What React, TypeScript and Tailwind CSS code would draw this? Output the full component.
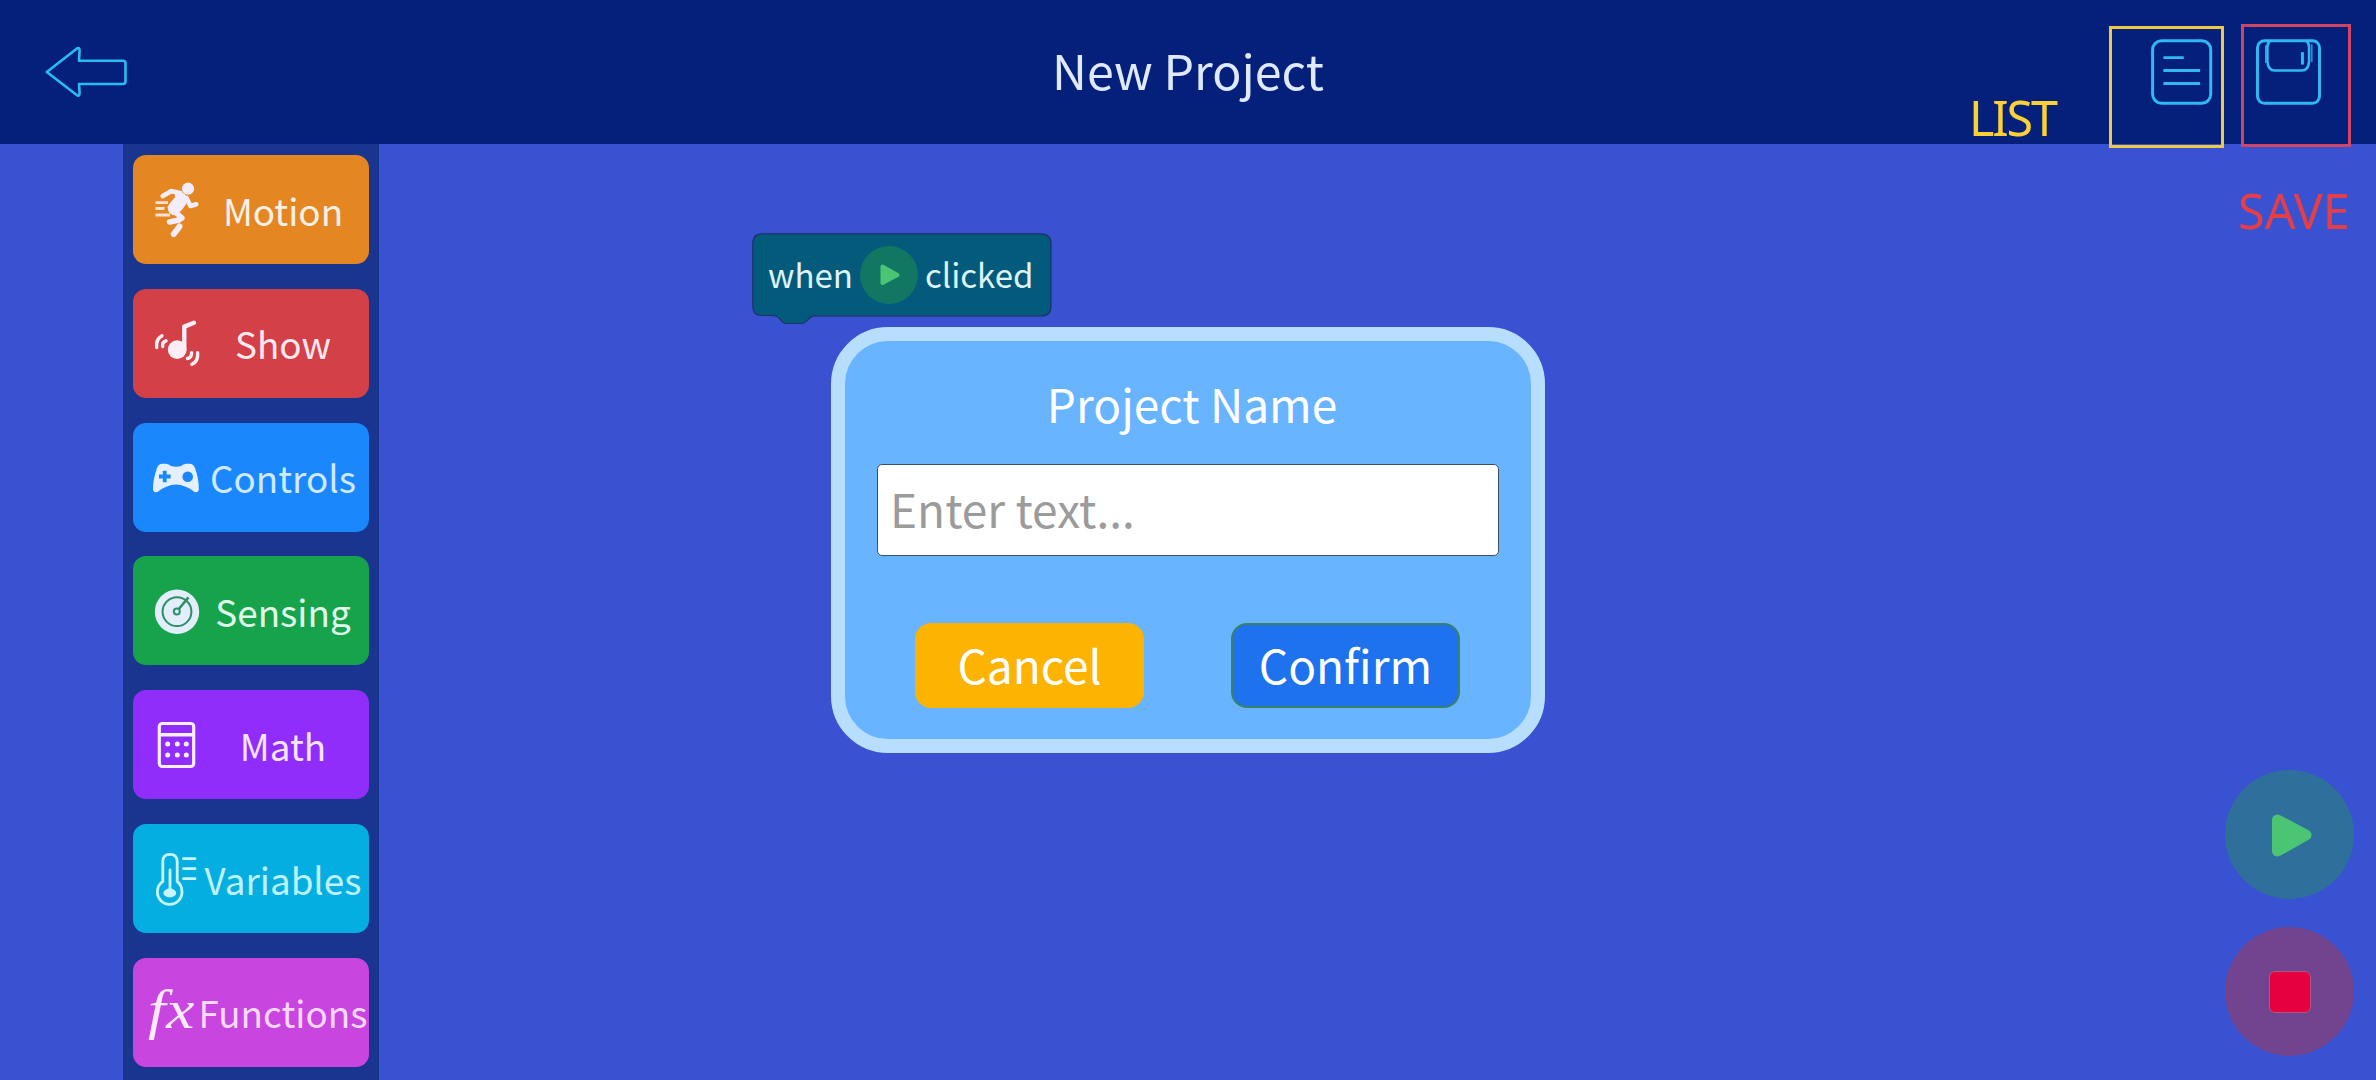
import React from 'react';

interface Category {
  label: string;
  button: string;
  icon: React.ReactNode;
}

const MotionIcon = () => (
  <g stroke="#f3edfb" strokeLinecap="round" strokeLinejoin="round" fill="none">
    <circle cx="55" cy="33.7" r="6.1" fill="#f3edfb" stroke="none" />
    <path d="M29.8 41 L38 36.2 L47 38" strokeWidth="4.8" />
    <path d="M43 36 L51 39 L55 44 L52 50 L47.5 56 L40 60 Q34.5 57 35 52 Q37 48 42 43 Z" fill="#f3edfb" strokeWidth="1" />
    <path d="M53.5 43 L57.5 51 L63.3 49.3" strokeWidth="4.6" />
    <path d="M41 56 L49 63 L46 65 L36.5 67" strokeWidth="5.4" />
    <path d="M46.5 71.5 L40.8 79" strokeWidth="6" />
    <path d="M22.5 47.7 H35 M22.5 53.5 H31.5 M22.5 60 H37" strokeWidth="2.8" stroke="#fbe3d0" strokeLinecap="butt" />
  </g>
);

const ShowIcon = () => (
  <g stroke="#fdeef5" strokeLinecap="round" strokeLinejoin="round" fill="none">
    <circle cx="44.2" cy="60.7" r="9.4" fill="#fdeef5" stroke="none" />
    <path d="M51.3 60 V37.6 L61 33.8" strokeWidth="4.4" />
    <path d="M23.7 58.5 Q22.5 50.5 29 46.8 M29.8 57.5 Q28.6 53.5 33 51.8" strokeWidth="3.4" />
    <path d="M54.5 69.5 Q58.5 69 58.6 63.8 M58.8 75.3 Q65.5 72.5 64.6 63.8" strokeWidth="3.4" />
  </g>
);

const ControlsIcon = () => (
  <path
    fill="#e4f0ff"
    fillRule="evenodd"
    d="M29 40.8 H33 Q36 41 38 43 Q43 44.5 48 43 Q50 41 53 40.8 H57 Q60.5 41 62 45 Q66 56 65.8 66 Q65.5 70 61.5 69 Q52 61.5 43 61.5 Q34 61.5 24.5 69 Q20.2 70 20 66 Q20 56 24 45 Q25.5 41 29 40.8 Z M29.8 47.8 V51.6 H26 V55.4 H29.8 V59.2 H33.6 V55.4 H37.6 V51.6 H33.6 V47.8 Z M54.7 48.4 A5.3 5.3 0 1 0 54.7 59 A5.3 5.3 0 1 0 54.7 48.4 Z"
  />
);

const SensingIcon = () => (
  <g fill="none" stroke="#2f8f67" strokeWidth="2">
    <circle cx="44" cy="55.7" r="22.2" fill="#e2effb" stroke="none" />
    <circle cx="44" cy="55.7" r="14.4" />
    <circle cx="43.8" cy="55.5" r="3" />
    <path d="M45.8 53 L55.5 41.3" strokeWidth="2.6" />
  </g>
);

const MathIcon = () => (
  <g fill="none" stroke="#fbeeff" strokeWidth="3.2">
    <rect x="26.3" y="33.5" width="34.4" height="43" rx="3" />
    <path d="M26 44.8 H61" strokeWidth="3.4" />
    <path d="M34.7 54 h.01 M44.3 54 h.01 M53.3 54 h.01 M34.7 65 h.01 M44.3 65 h.01 M53.3 65 h.01" strokeWidth="5" strokeLinecap="round" />
  </g>
);

const VariablesIcon = () => (
  <g fill="none" stroke="#c8f6ff" strokeWidth="2.8" strokeLinecap="round">
    <path d="M29.8 37.5 Q29.8 30.3 37 30.3 Q44.2 30.3 44.2 37.5 V57.5 Q49 61 49 68 A12.3 12.3 0 0 1 24.4 68 Q24.4 61 29.8 57.5 Z" />
    <path d="M37 46 V66" />
    <ellipse cx="36.8" cy="69" rx="6.4" ry="4.4" fill="#c8f6ff" stroke="none" />
    <path d="M50.5 34.7 H62 M50.5 44.7 H62 M50.5 54.7 H62" />
  </g>
);

const FunctionsIcon = () => (
  <text transform="scale(1.15 1)" y="70.5" fontSize="55" fontStyle="italic" fontFamily="Liberation Serif, serif" fill="#ffe9ff">
    <tspan x="13">f</tspan>
    <tspan x="29">x</tspan>
  </text>
);

const categories: Category[] = [
  { label: 'Motion', button: 'bg-[#e48723] text-[#f9f1e8]', icon: <MotionIcon /> },
  { label: 'Show', button: 'bg-[#d44048] text-[#ffe9f0]', icon: <ShowIcon /> },
  { label: 'Controls', button: 'bg-[#1a87fd] text-[#cfe9ff]', icon: <ControlsIcon /> },
  { label: 'Sensing', button: 'bg-[#16a34c] text-[#e0fbea]', icon: <SensingIcon /> },
  { label: 'Math', button: 'bg-[#912dfb] text-[#f5e4ff]', icon: <MathIcon /> },
  { label: 'Variables', button: 'bg-[#04aee1] text-[#bff1ff]', icon: <VariablesIcon /> },
  { label: 'Functions', button: 'bg-[#c845df] text-[#fbd9ff]', icon: <FunctionsIcon /> },
];

const Header = () => (
  <header className="flex h-36 items-center justify-between bg-[#04207b] pr-[55px] pl-[45px]">
    <button className="w-[180px]">
      <svg width="84" height="52" viewBox="0 0 84 52" fill="none" stroke="#28bdf2" strokeWidth="2.6" strokeLinejoin="round">
        <path d="M1.8 26 L32 2.4 Q34.6 1 34.6 4.5 L34 14.8 H78 Q80.5 14.8 80.5 17.3 V35 Q80.5 38 78 38 H34 L34.6 46.5 Q34.6 51 32 49.2 Z" />
      </svg>
    </button>
    <h1 className="pb-1.5 text-[48.3px] leading-none text-[#dfe9ff]">New Project</h1>
    <div className="flex w-[170px] justify-end gap-[43px]">
      <svg width="62" height="66" viewBox="0 0 62 66" fill="none" stroke="#30b8f4" strokeWidth="3">
        <rect x="1.6" y="1.5" width="58.6" height="63" rx="9" />
        <path d="M12.5 18.5 H33 M12.5 31.5 H49.5 M12.5 44.5 H49.5" />
      </svg>
      <svg width="66" height="66" viewBox="0 0 66 66" fill="none" stroke="#30b8f4" strokeWidth="3">
        <rect x="1.5" y="1.5" width="62.5" height="63" rx="7" />
        <path d="M14 2 Q11.5 4 11.5 8 V22 Q12 31.5 19 31.5 H46 Q53 31.5 53.5 22 V8 Q53.5 4 51 2" strokeWidth="2.6" />
        <path d="M9.8 6 V24 M56.3 5 V23" strokeWidth="1.2" />
        <path d="M46.8 13 V25.5" />
      </svg>
    </div>
  </header>
);

const Sidebar = () => (
  <nav className="ml-[123px] flex w-64 flex-col gap-[24.8px] bg-[#19358f] px-2.5 pt-[11px]">
    {categories.map(category => (
      <button key={category.label} className={`flex h-[109px] shrink-0 items-center rounded-[13px] ${category.button}`}>
        <svg width="65" height="109" viewBox="0 0 65 109" className="shrink-0 overflow-visible">
          {category.icon}
        </svg>
        <span className="w-[170px] pt-px text-center text-[36.8px] leading-none whitespace-nowrap">{category.label}</span>
      </button>
    ))}
  </nav>
);

const StartBlock = () => (
  <div className="absolute top-[89px] left-[373px] flex h-[84px] w-[300px] items-center pl-4 text-[33px] leading-none text-[#dff3fb]">
    <svg width="300" height="92" viewBox="0 0 300 92" className="absolute top-0 left-0">
      <path
        d="M10 .8 H289 Q299 .8 299 11 V73 Q299 83 289 83 H62 Q59 83 56.5 86 Q53 90.5 49 90.5 H34 Q31 90.5 28 86 Q25 82.5 20 82.5 H10 Q.8 82.5 .8 73 V11 Q.8 .8 10 .8 Z"
        fill="#045a7a"
        stroke="#1d3161"
        strokeWidth="1.2"
      />
    </svg>
    <span className="relative w-[92px] pb-0.5">when</span>
    <svg width="58" height="58" viewBox="0 0 58 58" className="relative">
      <circle cx="29" cy="29" r="29" fill="#117763" />
      <path d="M22.5 20.5 L37.5 29 L22.5 37 Z" fill="#4bc574" stroke="#4bc574" strokeWidth="4" strokeLinejoin="round" />
    </svg>
    <span className="relative pb-0.5 pl-[7px]">clicked</span>
  </div>
);

const RunControls = () => (
  <div className="absolute right-[22px] bottom-6 flex flex-col gap-7">
    <button className="flex size-[129px] items-center justify-center rounded-full bg-[#2f6f9c]">
      <svg width="46" height="48" viewBox="0 0 46 48" className="ml-1.5">
        <path d="M7.5 9 L36 24 L7.5 40 Z" fill="#4bc574" stroke="#4bc574" strokeWidth="11" strokeLinejoin="round" />
      </svg>
    </button>
    <button className="flex size-[129px] items-center justify-center rounded-full bg-[#72438f]">
      <span className="size-[42px] rounded-md border border-[#b05583] bg-[#e6003f]" />
    </button>
  </div>
);

const ProjectNameDialog = () => (
  <div className="fixed inset-0 flex items-center justify-center">
    <div className="flex h-[426px] w-[714px] flex-col items-center rounded-[57px] border-[14px] border-[#b7dffd] bg-[#69b4fe] px-8 pt-[39px] text-[46px] leading-none text-white">
      <h2 className="pl-2">Project Name</h2>
      <input
        type="text"
        placeholder="Enter text..."
        className="mt-[38px] h-[92px] w-[622px] shrink-0 rounded-[5px] border border-[#39506e] bg-white px-3 pb-1 text-[#333] placeholder:text-[#9b9b9b]"
      />
      <div className="mt-[67px] flex gap-[87px] pr-0.5">
        <button className="h-[85px] w-[229px] rounded-2xl bg-[#fcb302] pb-[3px] pl-px">Cancel</button>
        <button className="h-[85px] w-[229px] rounded-2xl border-2 border-[#3b8069] bg-[#1f72ed] pb-[3px] pl-px">Confirm</button>
      </div>
    </div>
  </div>
);

// Callouts that sit on top of the header actions
const Annotations = () => (
  <div className="font-['Noto_Sans',sans-serif] text-[48.5px] leading-none">
    <span className="absolute top-[93px] left-[1969px] tracking-[-2.2px] text-[#fdd035]">LIST</span>
    <span className="absolute top-[26px] left-[2109px] h-[122px] w-[115px] border-[3px] border-[#ecca47]" />
    <span className="absolute top-[24px] left-[2241px] h-[123px] w-[110px] border-[3px] border-[#cf4563]" />
    <span className="absolute top-[186px] left-[2238px] text-[#e63e47]">SAVE</span>
  </div>
);

export default function App() {
  return (
    <div className="relative flex h-screen w-full flex-col overflow-hidden bg-[#3852d2] font-['Noto_Sans_CJK_SC',sans-serif]">
      <Header />
      <main className="flex min-h-0 flex-1">
        <Sidebar />
        <section className="relative flex-1">
          <StartBlock />
          <RunControls />
        </section>
      </main>
      <ProjectNameDialog />
      <Annotations />
    </div>
  );
}
